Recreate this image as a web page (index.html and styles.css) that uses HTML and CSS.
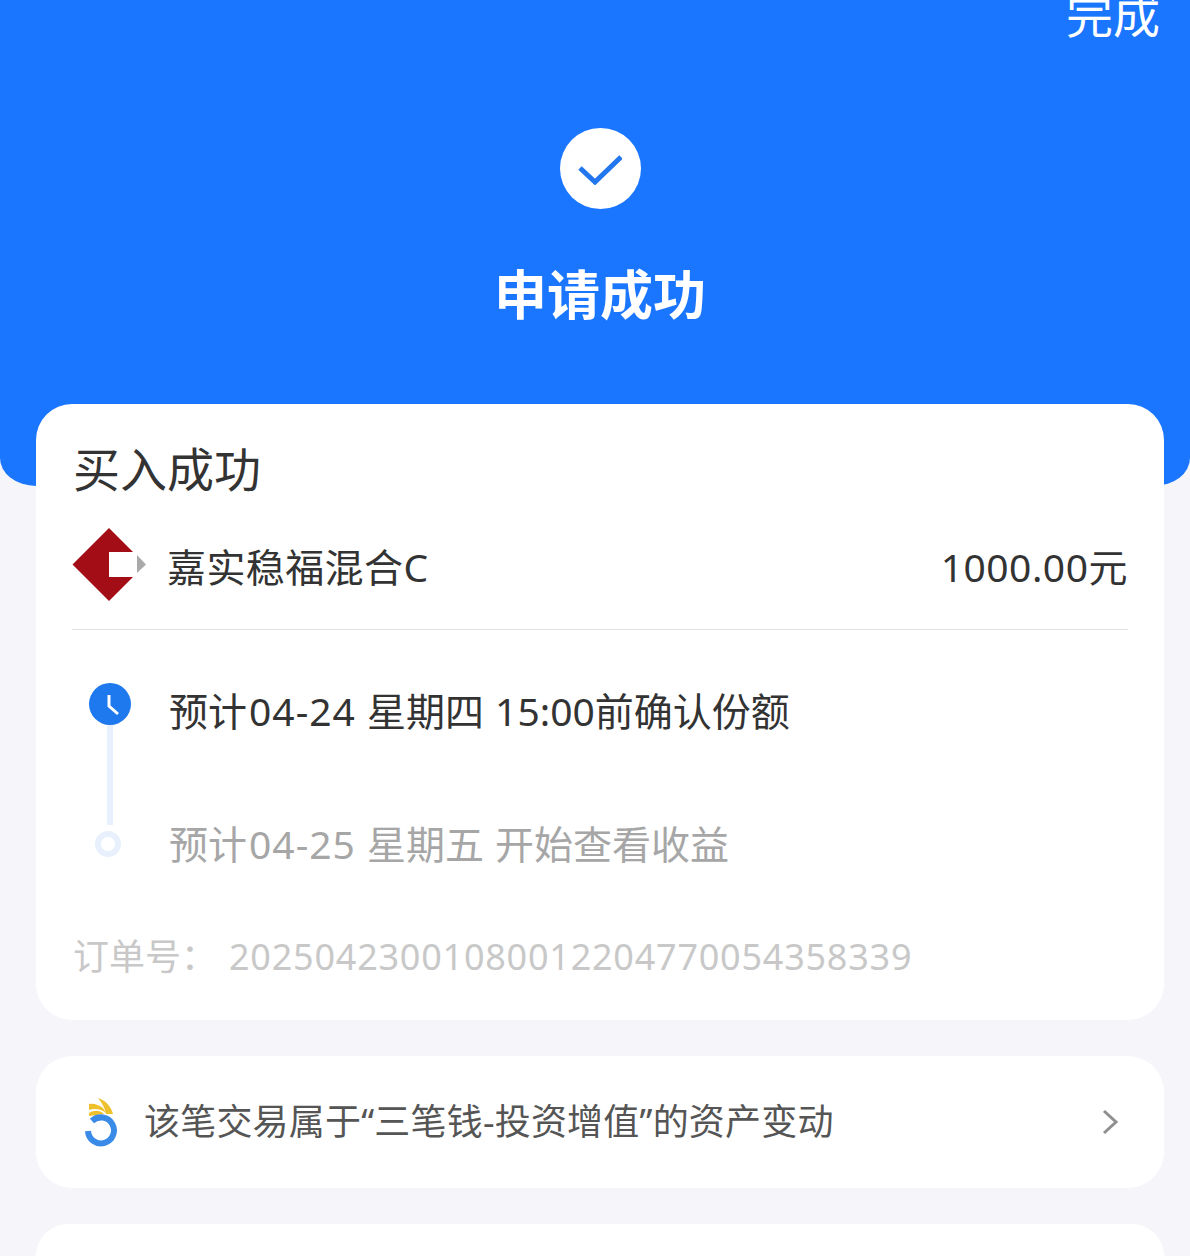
FILE: index.html
```html
<!DOCTYPE html>
<html lang="zh-CN">
<head>
    <meta charset="UTF-8">
    <meta name="viewport" content="width=device-width, initial-scale=1.0">
    <title>申请成功</title>
    <link rel="stylesheet" href="styles.css">
</head>
<body>

<div class="header">
    <div class="done">完成</div>
    <div class="check">
        <svg width="44" height="32" viewBox="0 0 44 32"><path d="M2 15 L17 29 L43 4" fill="none" stroke="#2277ee" stroke-width="5"/></svg>
    </div>
    <h1>申请成功</h1>
</div>

<div class="content">
    <div class="card main">
        <h2>买入成功</h2>
        <div class="fund">
            <svg class="logo" width="76" height="74" viewBox="0 0 76 74">
                <path d="M37 0 L73.500 36.500 L37 73 L0.500 36.500 Z" fill="#a30d16"/>
                <rect x="37" y="24" width="39" height="25" fill="#fff"/>
                <path d="M65 27 L74 36.500 L65 45 Z" fill="#aaa"/>
            </svg>
            <span class="fund-name">嘉实稳福混合C</span>
            <span class="fund-amount">1000.00元</span>
        </div>
        <div class="steps">
            <div class="step">
                <div class="clock">
                    <svg width="42" height="42" viewBox="0 0 42 42"><path d="M20 12 L20 23 L29 31" fill="none" stroke="#fff" stroke-width="3"/></svg>
                </div>
                <span>预计<span class="date">04-24</span> 星期四 15:00前确认份额</span>
            </div>
            <div class="step later">
                <div class="dot"></div>
                <span>预计<span class="date">04-25</span> 星期五 开始查看收益</span>
            </div>
        </div>
        <div class="order">
            <span class="order-label">订单号：</span>
            <span class="order-no">20250423001080012204770054358339</span>
        </div>
    </div>

    <div class="card link">
        <svg class="coin" width="36" height="50" viewBox="0 0 36 50">
            <path d="M16 1 C23 3 29 9 31 17 L24 17 C23 11 20 6 16 1 Z" fill="#eec12c"/>
            <path d="M7 7 C12 6 17 8 21 11 L24 16 C19 12 13 11 7 13 Z" fill="#eec12c"/>
            <path d="M7 16 C12 13 18 13 22 17 L7 19 Z" fill="#eec12c"/>
            <path d="M10 24 A13 13 0 1 1 6 34" fill="none" stroke="#3a8be8" stroke-width="6"/>
        </svg>
        <span class="link-text">该笔交易属于“三笔钱-投资增值”的资产变动</span>
        <svg class="arrow" width="18" height="26" viewBox="0 0 18 26"><path d="M2 2 L14 13 L2 24" fill="none" stroke="#8f8f8f" stroke-width="3"/></svg>
    </div>

    <div class="card bottom"></div>
</div>

</body>
</html>
```

FILE: styles.css
```css
body {
    font-family: "Noto Sans", "Noto Sans CJK SC", sans-serif;
    margin: 0;
    padding: 0;
    background-color: #f5f5fa;
}
.header {
    background-color: #1a76ff;
    height: 486px;
    padding-left: 10px;
    border-radius: 0 0 36px 36px / 0 0 28px 28px;
    color: white;
    display: flex;
    flex-direction: column;
    align-items: center;
}
.done {
    align-self: flex-end;
    font-size: 47px;
    line-height: 47px;
    height: 47px;
    margin-top: -8px;
    margin-right: 30px;
}
.check {
    width: 81px;
    height: 81px;
    background-color: white;
    border-radius: 50%;
    margin-top: 89px;
    display: flex;
    align-items: center;
    justify-content: center;
}
h1 {
    font-size: 53px;
    line-height: 60px;
    font-weight: 700;
    margin: 56px 0 0;
}
.content {
    margin-top: -82px;
    padding: 0 26px 0 36px;
}
.card {
    background-color: white;
    border-radius: 36px;
    margin-bottom: 36px;
}
.main {
    height: 616px;
    padding: 37px 36px 0;
    box-sizing: border-box;
}
h2 {
    font-size: 47px;
    line-height: 56px;
    font-weight: 400;
    color: #333;
    margin: 0 0 0 1px;
}
.fund {
    display: flex;
    align-items: center;
    margin-top: 31px;
    padding-bottom: 27px;
    border-bottom: 1px solid #e2e2e2;
}
.logo {
    margin-right: 19px;
}
.fund-name,
.fund-amount {
    font-size: 39px;
    color: #333;
}
.fund-name {
    letter-spacing: 0.4px;
}
.fund-amount {
    margin-left: auto;
    letter-spacing: 0.5px;
}
.steps {
    margin-top: 49px;
    position: relative;
}
.steps::before {
    content: "";
    position: absolute;
    left: 35px;
    top: 42px;
    height: 104px;
    width: 6px;
    background-color: #e8f0fd;
}
.step {
    display: flex;
    align-items: center;
    height: 60px;
    margin-bottom: 73px;
    font-size: 39px;
    color: #333;
    word-spacing: 1px;
}
.step span {
    margin-left: 38px;
}
.step span.date {
    margin-left: 2px;
    letter-spacing: 1px;
}
.step.later {
    color: #a6a6a6;
    margin-bottom: 0;
}
.clock {
    width: 42px;
    height: 42px;
    margin-left: 17px;
    margin-bottom: 10px;
    background-color: #1e78ee;
    border-radius: 50%;
    position: relative;
    z-index: 1;
}
.dot {
    width: 14px;
    height: 14px;
    margin-left: 23px;
    margin-top: 4px;
    border: 6px solid #e8f0fd;
    border-radius: 50%;
    background-color: white;
    position: relative;
    z-index: 1;
}
.step.later > span {
    margin-left: 48px;
}
.order {
    display: flex;
    margin-top: 60px;
    font-size: 36px;
    color: #c8c8c8;
    line-height: 50px;
}
.order-label {
    margin-left: 1px;
}
.order-no {
    margin-left: 12px;
    letter-spacing: 0.76px;
}
.link {
    height: 132px;
    display: flex;
    align-items: center;
    padding: 0 44px 0 46px;
}
.link-text {
    font-size: 36px;
    color: #555;
    margin-left: 26px;
    margin-bottom: 6px;
    letter-spacing: 0.2px;
}
.arrow {
    margin-left: auto;
}
.bottom {
    height: 32px;
    margin-bottom: 0;
    border-radius: 36px 36px 0 0;
}
```
